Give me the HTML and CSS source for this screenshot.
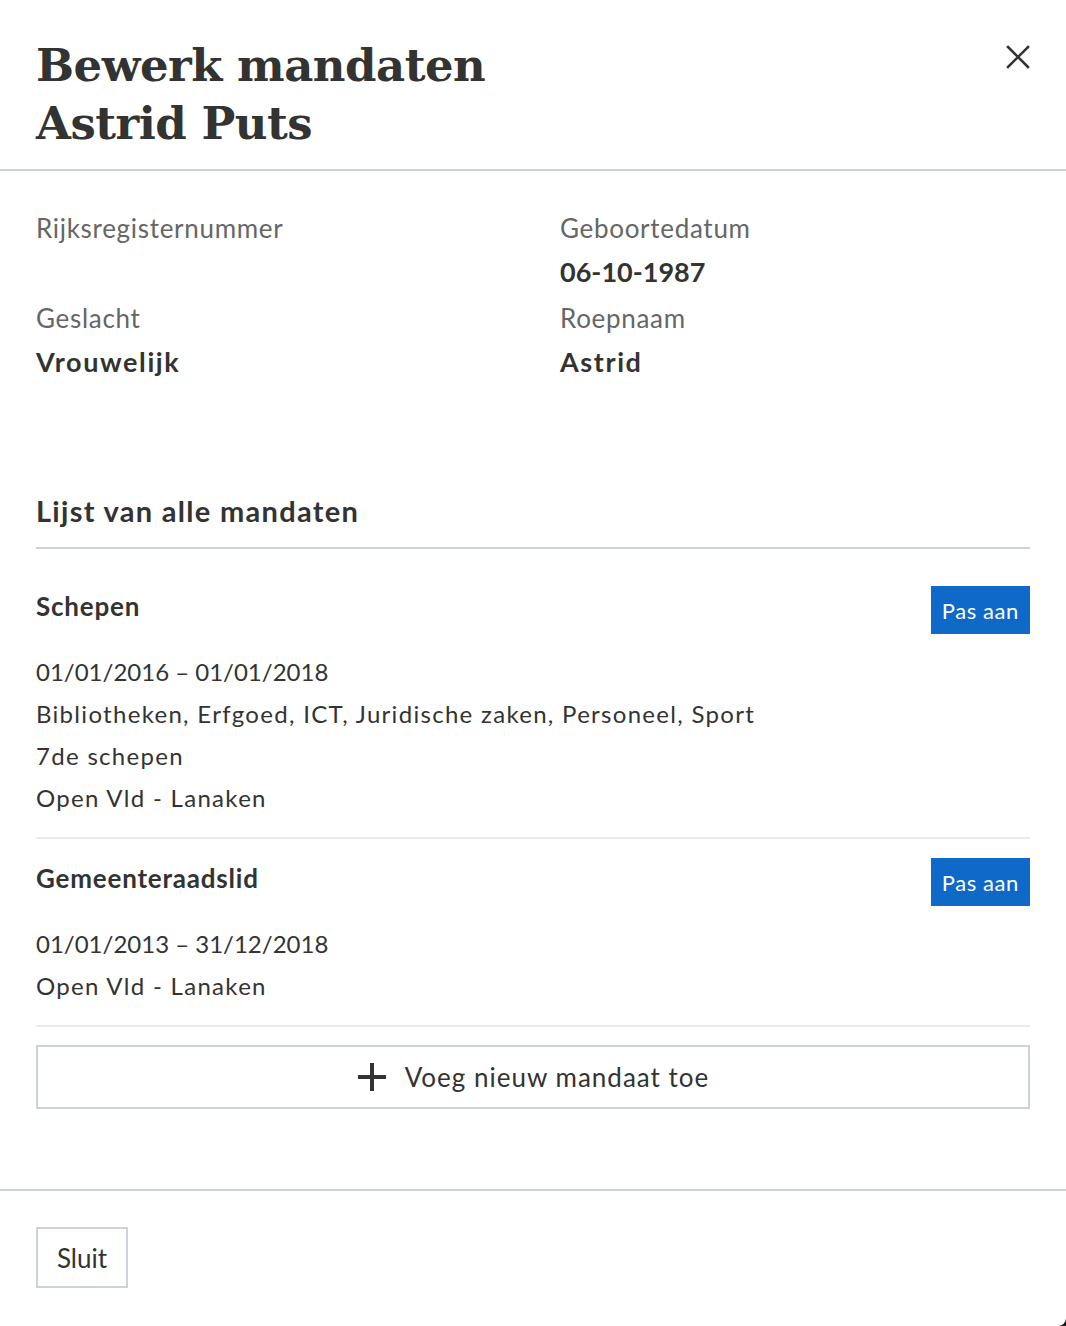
FILE: index.html
```html
<!DOCTYPE html>
<html lang="nl">
<head>
<meta charset="utf-8">
<title>Bewerk mandaten</title>
<link rel="stylesheet" href="styles.css">
</head>
<body>
<div class="modal">
  <header class="modal-header">
    <h1 class="modal-title">Bewerk mandaten<br>Astrid Puts</h1>
    <button class="close-btn" aria-label="Sluit">
      <svg width="24" height="24" viewBox="0 0 24 24"><path d="M2 2 L22 22 M22 2 L2 22" stroke="#333332" stroke-width="2.6" stroke-linecap="square" fill="none"/></svg>
    </button>
  </header>

  <section class="modal-body">
    <dl class="info-grid">
      <div class="info-item">
        <dt class="info-label">Rijksregisternummer</dt>
        <dd class="info-value"></dd>
      </div>
      <div class="info-item">
        <dt class="info-label">Geboortedatum</dt>
        <dd class="info-value info-date">06-10-1987</dd>
      </div>
      <div class="info-item">
        <dt class="info-label">Geslacht</dt>
        <dd class="info-value">Vrouwelijk</dd>
      </div>
      <div class="info-item">
        <dt class="info-label">Roepnaam</dt>
        <dd class="info-value">Astrid</dd>
      </div>
    </dl>

    <h2 class="list-title">Lijst van alle mandaten</h2>

    <ul class="mandate-list">
      <li class="mandate">
        <div class="mandate-head">
          <h3 class="mandate-name">Schepen</h3>
          <button class="btn-primary">Pas aan</button>
        </div>
        <p class="mandate-line mandate-date">01/01/2016 – 01/01/2018</p>
        <p class="mandate-line">Bibliotheken, Erfgoed, ICT, Juridische zaken, Personeel, Sport</p>
        <p class="mandate-line">7de schepen</p>
        <p class="mandate-line">Open Vld - Lanaken</p>
      </li>
      <li class="mandate">
        <div class="mandate-head">
          <h3 class="mandate-name">Gemeenteraadslid</h3>
          <button class="btn-primary">Pas aan</button>
        </div>
        <p class="mandate-line mandate-date">01/01/2013 – 31/12/2018</p>
        <p class="mandate-line">Open Vld - Lanaken</p>
      </li>
    </ul>

    <button class="btn-add">
      <svg class="plus" width="30" height="30" viewBox="0 0 30 30"><path d="M15 1 V29 M1 15 H29" stroke="#333332" stroke-width="4" fill="none"/></svg>
      <span>Voeg nieuw mandaat toe</span>
    </button>
  </section>

  <footer class="modal-footer">
    <button class="btn-secondary">Sluit</button>
  </footer>
</div>
</body>
</html>
```
FILE: styles.css
```css
* { box-sizing: border-box; }

html, body {
  margin: 0;
  padding: 0;
}

body {
  background: #1a1a1a;
  font-family: Lato, "Open Sans", sans-serif;
  color: #333332;
}

.modal {
  width: 1066px;
  min-height: 1326px;
  background: #fff;
  border-bottom-right-radius: 8px;
}

.modal-header {
  display: flex;
  justify-content: space-between;
  align-items: flex-start;
  padding: 37px 36px 16px 36px;
  border-bottom: 2px solid #cbd2da;
}

.modal-title {
  margin: 0;
  font-family: "DejaVu Serif", "Liberation Serif", serif;
  font-weight: bold;
  font-size: 45px;
  line-height: 58px;
  color: #333332;
  letter-spacing: -0.5px;
}

.close-btn {
  margin-top: 8px;
  padding: 0;
  border: 0;
  background: none;
  width: 24px;
  height: 24px;
  display: flex;
}

.modal-body {
  padding: 36px 36px 80px 36px;
}

.info-grid {
  margin: 0;
  display: grid;
  grid-template-columns: 1fr 1fr;
  column-gap: 54px;
  row-gap: 4px;
}

.info-item { margin: 0; }

.info-label {
  font-size: 26px;
  line-height: 43px;
  letter-spacing: 0.7px;
  color: #666666;
}

.info-value {
  margin: 0;
  min-height: 43px;
  font-size: 27px;
  line-height: 43px;
  letter-spacing: 1.6px;
  font-weight: bold;
  color: #333332;
}

.info-value.info-date {
  letter-spacing: 0;
}

.list-title {
  margin: 108px 0 0 0;
  padding-bottom: 16px;
  border-bottom: 2px solid #cbd2da;
  font-size: 29px;
  line-height: 40px;
  letter-spacing: 1.3px;
  font-weight: bold;
}

.mandate-list {
  list-style: none;
  margin: 18px 0 0 0;
  padding: 0;
}

.mandate {
  padding: 19px 0 18px 0;
  border-bottom: 2px solid #e8ebee;
}

.mandate-head {
  display: flex;
  justify-content: space-between;
  align-items: flex-start;
  margin-bottom: 17px;
}

.mandate-name {
  margin: 0;
  font-size: 26px;
  line-height: 40px;
  letter-spacing: 0.8px;
  font-weight: bold;
}

.mandate-line {
  margin: 0;
  font-size: 24px;
  line-height: 42px;
  letter-spacing: 1.3px;
}

.mandate-line.mandate-date {
  letter-spacing: 0;
}

.btn-primary {
  height: 48px;
  padding: 0 11px;
  border: 0;
  background: #0e69c9;
  color: #fff;
  font-family: inherit;
  font-size: 22px;
  letter-spacing: 0.6px;
}

.btn-add {
  margin-top: 18px;
  width: 100%;
  height: 64px;
  display: flex;
  align-items: center;
  justify-content: center;
  gap: 18px;
  background: #fff;
  border: 2px solid #cbd2da;
  font-family: inherit;
  font-size: 26px;
  letter-spacing: 1px;
  color: #333332;
}

.plus { flex: none; }

.modal-footer {
  border-top: 2px solid #cbd2da;
  padding: 36px;
}

.btn-secondary {
  width: 92px;
  height: 61px;
  background: #fff;
  border: 2px solid #cbd2da;
  font-family: inherit;
  font-size: 26px;
  color: #333332;
  padding: 0;
}
```
